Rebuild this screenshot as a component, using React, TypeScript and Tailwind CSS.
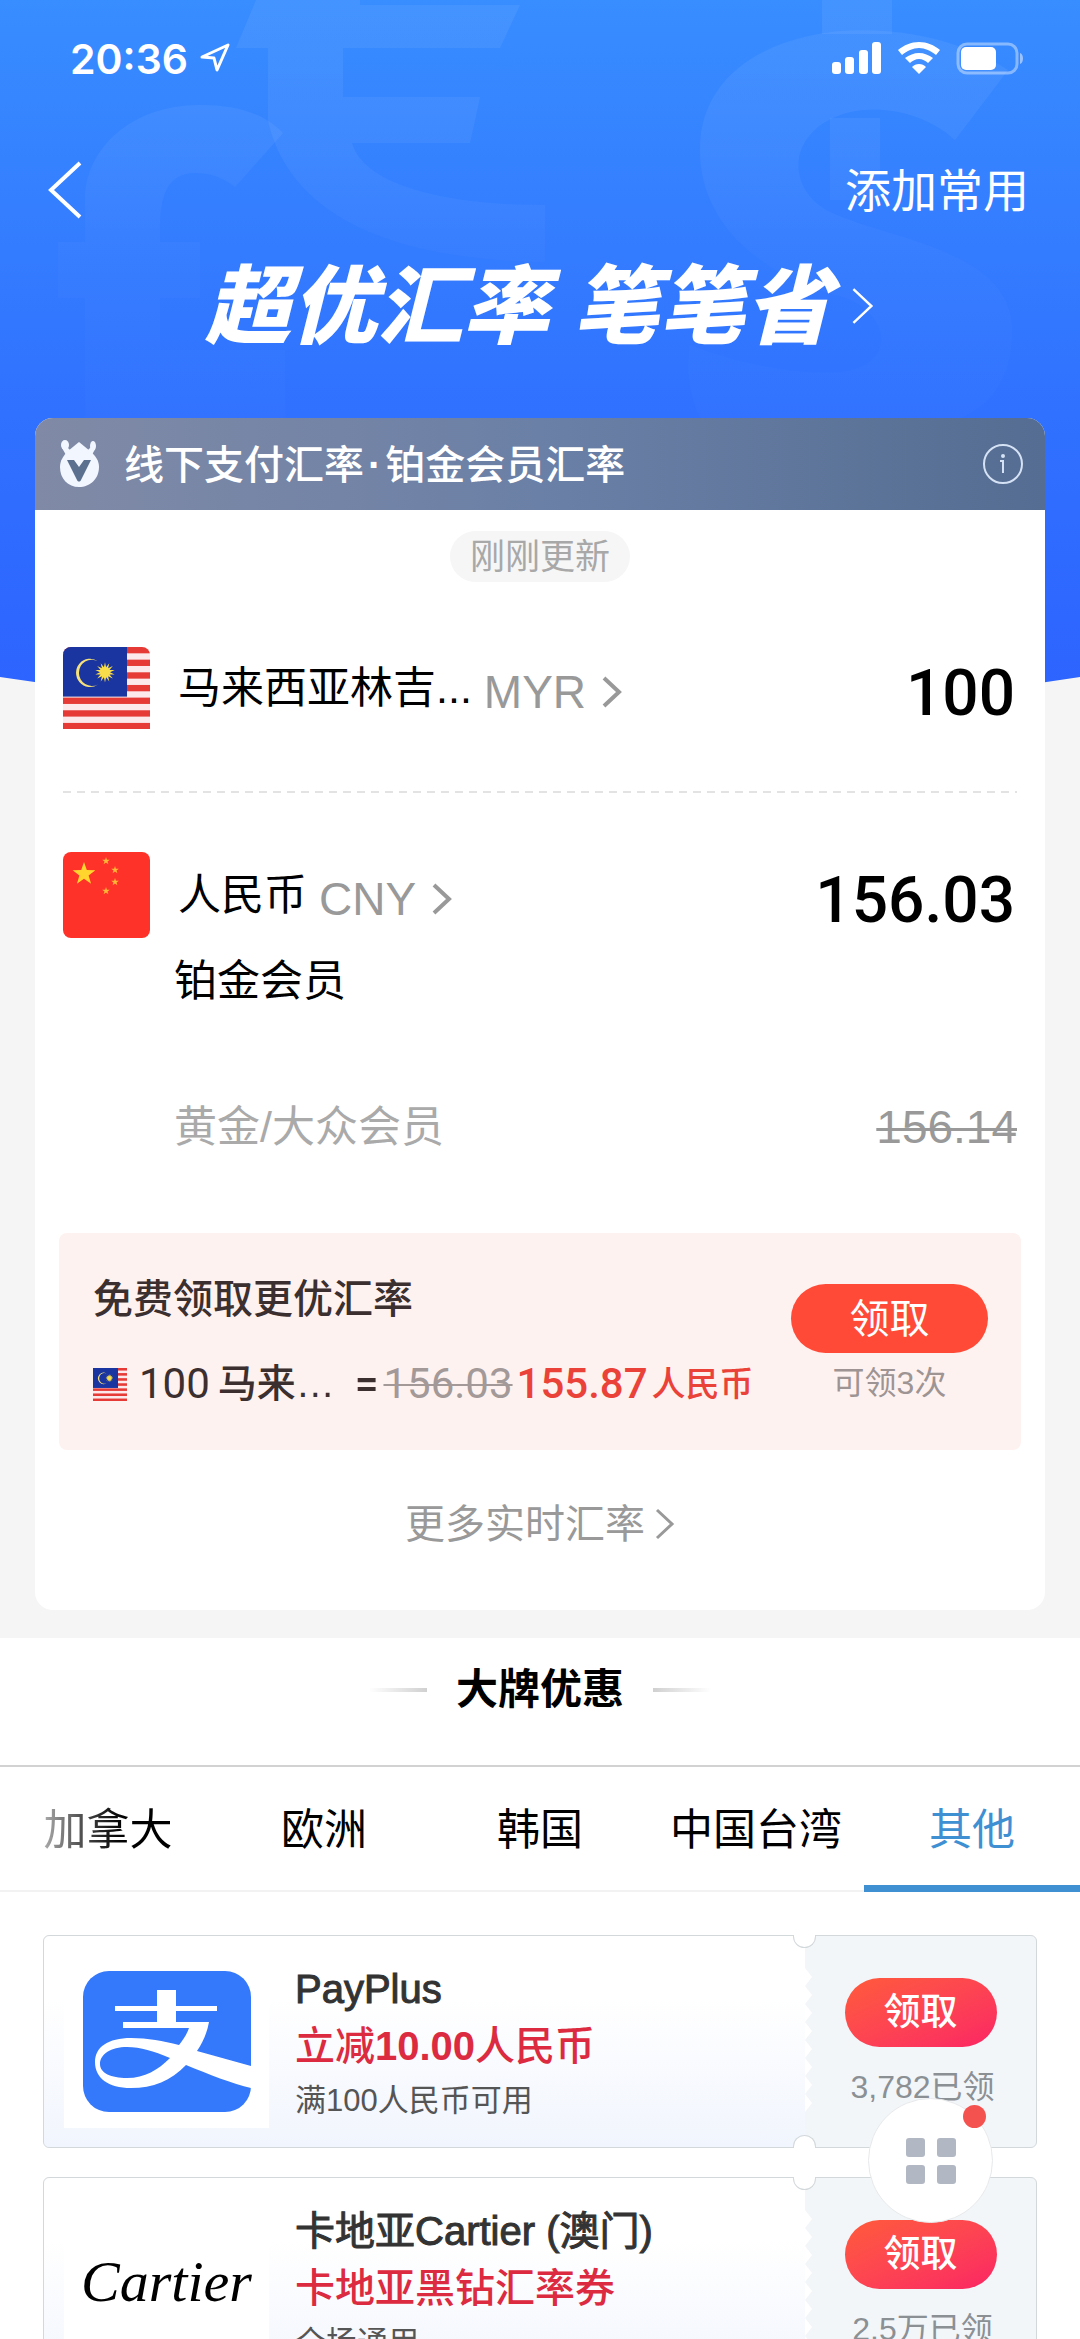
import type { ReactNode } from "react";

const starPoints = (cx: number, cy: number, r: number) =>
  Array.from({ length: 10 }, (_, i) => {
    const a = (Math.PI / 5) * i - Math.PI / 2;
    const d = i % 2 ? r * 0.4 : r;
    return `${(cx + d * Math.cos(a)).toFixed(1)},${(cy + d * Math.sin(a)).toFixed(1)}`;
  }).join(" ");

const sunPoints = (cx: number, cy: number, r: number) =>
  Array.from({ length: 28 }, (_, i) => {
    const a = (Math.PI / 14) * i - Math.PI / 2;
    const d = i % 2 ? r * 0.5 : r;
    return `${(cx + d * Math.cos(a)).toFixed(1)},${(cy + d * Math.sin(a)).toFixed(1)}`;
  }).join(" ");

function HeaderBackdrop() {
  return (
    <svg
      className="absolute inset-x-0 top-0 h-[720px] w-full"
      viewBox="0 0 1080 720"
      preserveAspectRatio="none"
      aria-hidden="true"
    >
      <defs>
        <linearGradient id="sky" x1="0" y1="0" x2="0" y2="1">
          <stop offset="0" stopColor="#388dff" />
          <stop offset="0.3" stopColor="#347eff" />
          <stop offset="0.58" stopColor="#3071ff" />
          <stop offset="1" stopColor="#2d62ff" />
        </linearGradient>
        <linearGradient id="fade" gradientUnits="userSpaceOnUse" x1="0" y1="0" x2="0" y2="420">
          <stop offset="0" stopColor="#fff" stopOpacity="0.06" />
          <stop offset="0.35" stopColor="#fff" stopOpacity="0.05" />
          <stop offset="0.6" stopColor="#fff" stopOpacity="0.02" />
          <stop offset="1" stopColor="#fff" stopOpacity="0.01" />
        </linearGradient>
      </defs>
      <path d="M0 0H1080V677Q540 760 0 677Z" fill="url(#sky)" />
      <path
        d="M85 420V298H58V242H85V200C85 150 130 105 200 105C240 105 265 115 283 133L235 187C222 177 210 173 195 173C165 173 160 200 160 230V242H200V298H160V350H285V420Z"
        fill="url(#fade)"
      />
      <path
        d="M256 0H360V5H520L500 48H343V97H480L470 143H352C362 180 430 205 545 205V262C400 260 290 220 268 120V48H236Z"
        fill="url(#fade)"
      />
      <path d="M822 0H892V34H822ZM830 118H880V200H830Z" fill="url(#fade)" />
      <path
        d="M1008 70L955 140C925 112 880 105 850 112C785 128 785 190 830 212C890 240 1012 250 1012 330C1012 380 990 405 960 418H700C690 395 686 375 690 345C740 365 800 375 840 372C900 366 890 310 840 296C770 278 700 230 700 150C700 20 900 0 1008 70Z"
        fill="url(#fade)"
      />
    </svg>
  );
}

function LocationArrow() {
  return (
    <svg width="30" height="30" viewBox="0 0 30 30" fill="none" stroke="#fff" strokeWidth="3" strokeLinejoin="round" aria-hidden="true">
      <path d="M2 14L28 2L17 27L14 15Z" />
    </svg>
  );
}

function StatusIcons() {
  return (
    <div className="flex items-center gap-4" aria-hidden="true">
      <svg width="50" height="32" viewBox="0 0 50 32" fill="#fff">
        <rect x="0" y="20" width="9" height="12" rx="3" />
        <rect x="13" y="15" width="9" height="17" rx="3" />
        <rect x="27" y="8" width="9" height="24" rx="3" />
        <rect x="40" y="0" width="9" height="32" rx="3" />
      </svg>
      <svg width="42" height="32" viewBox="0 0 42 32" fill="#fff">
        <path d="M21 0C13 0 6 3 0 8L4 13C9 9 15 6 21 6C27 6 33 9 38 13L42 8C36 3 29 0 21 0Z" />
        <path d="M21 11C16 11 11 13 7 16L12 21C14 19 18 17 21 17C24 17 28 19 30 21L35 16C31 13 26 11 21 11Z" />
        <path d="M21 22C18 22 16 23 14 25L21 32L28 25C26 23 24 22 21 22Z" />
      </svg>
      <svg width="69" height="33" viewBox="0 0 69 33">
        <rect x="2" y="2" width="59" height="29" rx="9" fill="none" stroke="#fff" strokeOpacity="0.4" strokeWidth="3" />
        <rect x="5" y="5" width="35" height="23" rx="5" fill="#fff" />
        <path d="M64 11C68 12 68 21 64 22Z" fill="#fff" fillOpacity="0.5" />
      </svg>
    </div>
  );
}

function Chevron({ className, width = 3 }: { className: string; width?: number }) {
  return (
    <svg className={className} viewBox="0 0 20 32" fill="none" stroke="currentColor" strokeWidth={width} aria-hidden="true">
      <path d="M2 2L17 16L2 30" />
    </svg>
  );
}

function MemberBadge() {
  return (
    <svg width="40" height="50" viewBox="0 0 40 50" className="shrink-0" aria-hidden="true">
      <g fill="#f2f6ff">
        <ellipse cx="6" cy="6" rx="4" ry="5" />
        <ellipse cx="34" cy="7" rx="3" ry="5" />
        <path d="M3 9L7 16L12 12L8 8ZM36 10L33 16L28 12L32 8Z" />
        <path d="M20 3L31 12C37 17 40 22 40 28C40 40 31 48 20 48C9 48 1 40 1 28C1 22 4 17 9 12Z" />
      </g>
      <path d="M8 21H15L20 28L25 21H32L22 41C21 43 19 43 18 41Z" fill="#5b6f8f" />
    </svg>
  );
}

function InfoIcon() {
  return (
    <svg width="42" height="42" viewBox="0 0 42 42" fill="none" stroke="#d5e2f5" strokeWidth="2" aria-hidden="true">
      <circle cx="21" cy="21" r="19" />
      <path d="M18 18H21V30" />
      <circle cx="21" cy="13" r="1" />
    </svg>
  );
}

function MalaysiaFlag({ className }: { className: string }) {
  return (
    <svg className={className} viewBox="0 0 87 81" preserveAspectRatio="none" role="img" aria-label="MYR">
      <rect width="87" height="81" fill="#fbe9ec" />
      {[0, 2, 4, 6, 8, 10, 12].map((i) => (
        <rect key={i} y={i * 6.25} width="87" height="6.25" fill="#e53a35" />
      ))}
      <rect width="64" height="49" fill="#1a34a0" />
      <path d="M35 14A14 14 0 1 0 35 37A13 13 0 1 1 35 14Z" fill="#f5e07a" />
      <polygon points={sunPoints(42, 25, 10)} fill="#f8de4a" />
    </svg>
  );
}

function ChinaFlag({ className }: { className: string }) {
  return (
    <svg className={className} viewBox="0 0 87 86" role="img" aria-label="CNY">
      <rect width="87" height="86" fill="#ff3229" />
      <polygon points={starPoints(21, 22, 12)} fill="#ffd52e" />
      <g fill="#ffb836">
        <polygon points={starPoints(43, 9, 4)} />
        <polygon points={starPoints(52, 18, 4)} />
        <polygon points={starPoints(52, 30, 4)} />
        <polygon points={starPoints(43, 39, 4)} />
      </g>
    </svg>
  );
}

function AlipayLogo() {
  return (
    <svg width="168" height="141" viewBox="0 0 168 141" role="img" aria-label="PayPlus">
      <rect width="168" height="141" rx="26" fill="#3478fb" />
      <path
        fill="#fff"
        fillRule="evenodd"
        d="M106 57H40V51H74V40H32V35H74V19H93V35H134V40H93V51H126C124 62 120 71 114 80L168 95V117C150 113 125 103 103 94C88 110 70 117 48 117C25 117 12 107 12 91C12 76 25 67 48 67C65 67 80 70 96 74C100 69 104 63 106 57ZM87 87C70 80 58 76 44 76C28 76 17 83 17 93C17 102 28 107 44 107C62 107 75 99 87 87Z"
      />
    </svg>
  );
}

function CurrencyRow({ flag, name, code, amount }: { flag: ReactNode; name: string; code: string; amount: string }) {
  return (
    <div className="flex h-[100px] items-center pr-[30px] pl-7">
      {flag}
      <button className="ml-[28px] flex items-center">
        <span className="text-[43px] leading-[48px] text-black">{name}</span>
        <span className="ml-3 pt-2 text-[46px] leading-[48px] text-[#999]">{code}</span>
        <Chevron className="mt-2 ml-4 h-8 w-5 text-[#999]" width={4} />
      </button>
      <span className="ml-auto pt-3 font-['Roboto',sans-serif] text-[64px] leading-[70px] font-medium text-black">{amount}</span>
    </div>
  );
}

function Coupon({
  logo,
  title,
  offer,
  note,
  count,
}: {
  logo: ReactNode;
  title: string;
  offer: ReactNode;
  note: string;
  count: string;
}) {
  return (
    <li className="relative flex h-[213px] rounded-[6px] border border-[#d3d8db] bg-[#f3f6f9]">
      <div className="flex grow items-center rounded-l-[6px] bg-gradient-to-b from-white from-30% to-[#f1f5fd] pl-5">
        <div className="flex h-[172px] w-[205px] items-center justify-center bg-white">{logo}</div>
        <div className="ml-[26px] pt-1">
          <h3 className="text-[40px] leading-[52px] font-normal whitespace-nowrap text-[#333] [-webkit-text-stroke:1px_#333]">{title}</h3>
          <p className="mt-1 text-[40px] leading-[54px] font-medium whitespace-nowrap text-[#dc2b40]">{offer}</p>
          <p className="mt-1 text-[31px] leading-[48px] whitespace-nowrap text-[#555]">{note}</p>
        </div>
      </div>
      <div className="relative flex w-[231px] shrink-0 flex-col items-center pt-[42px]">
        <svg className="absolute top-8 left-0 h-[144px] w-[10px]" viewBox="0 0 10 144" aria-hidden="true">
          {[0, 1, 2, 3, 4, 5, 6, 7].map((i) => (
            <path key={i} d={`M0 ${i * 18}L7 ${i * 18 + 9}L0 ${i * 18 + 18}Z`} fill="#fff" />
          ))}
        </svg>
        <span className="absolute -top-px -left-3 h-[13px] w-[23px] rounded-b-full border border-t-0 border-[#d3d8db] bg-white" />
        <span className="absolute -bottom-px -left-3 h-[13px] w-[23px] rounded-t-full border border-b-0 border-[#d3d8db] bg-white" />
        <button className="h-[69px] w-[152px] rounded-full bg-gradient-to-br from-[#ff5a3a] to-[#fb2363] text-[37px] font-medium text-white">
          领取
        </button>
        <span className="mt-5 ml-1 text-[32px] leading-[40px] whitespace-nowrap text-[#8b9095]">{count}</span>
      </div>
    </li>
  );
}

const tabs = ["加拿大", "欧洲", "韩国", "中国台湾", "其他"];

export default function App() {
  return (
    <main className="relative h-screen overflow-hidden bg-white font-['Liberation_Sans','Noto_Sans_CJK_SC',sans-serif]">
      <div className="relative bg-[#f5f5f5] pb-7">
        <HeaderBackdrop />
        <header className="relative text-white">
          <div className="flex h-[116px] items-center justify-between pr-[55px] pl-[70px]">
            <div className="flex items-center gap-3">
              <span className="pt-[2px] font-['Inter',sans-serif] text-[41px] leading-[48px] font-semibold">20:36</span>
              <LocationArrow />
            </div>
            <StatusIcons />
          </div>
          <nav className="flex h-[148px] items-center justify-between pr-[51px] pl-[47px]">
            <button aria-label="返回">
              <svg width="36" height="58" viewBox="0 0 36 58" fill="none" stroke="#fff" strokeWidth="4" aria-hidden="true">
                <path d="M33 2L4 29L33 56" />
              </svg>
            </button>
            <button className="pt-[2px] text-[46px] leading-[56px]">添加常用</button>
          </nav>
          <h1 className="mb-[70px] flex h-[84px] justify-center">
            <a href="#rates" className="flex items-center gap-5">
              <span className="pt-[2px] text-[86px] leading-[84px] font-black whitespace-nowrap italic">超优汇率 笔笔省</span>
              <Chevron className="h-10 w-6" width={2} />
            </a>
          </h1>
        </header>

        <section id="rates" className="relative mx-[35px] overflow-hidden rounded-[18px] bg-white pb-[62px]">
          <div className="flex h-[92px] items-center bg-gradient-to-r from-[#808aa6] via-[#6b80a6] to-[#556d92] pr-[21px] pl-6">
            <MemberBadge />
            <h2 className="ml-[25px] pt-[2px] text-[40px] leading-[48px] font-medium whitespace-nowrap text-white">
              线下支付汇率<span className="px-1 font-bold">·</span>铂金会员汇率
            </h2>
            <button aria-label="说明" className="ml-auto">
              <InfoIcon />
            </button>
          </div>

          <div className="mt-[21px] flex justify-center">
            <span className="flex h-[51px] items-center rounded-full bg-[#f6f6f6] px-5 pt-[2px] text-[35px] text-[#a8a8a8]">刚刚更新</span>
          </div>

          <div className="mt-14">
            <CurrencyRow
              flag={<MalaysiaFlag className="h-[82px] w-[87px] rounded-t-[8px]" />}
              name="马来西亚林吉..."
              code="MYR"
              amount="100"
            />
          </div>
          <div className="mx-7 mt-[53px] h-[2px] bg-[repeating-linear-gradient(90deg,#e3e3e3_0_8px,transparent_8px_14px)]" />
          <div className="mt-[52px]">
            <CurrencyRow flag={<ChinaFlag className="h-[86px] w-[87px] rounded-[8px]" />} name="人民币" code="CNY" amount="156.03" />
          </div>
          <p className="mt-3 pl-[139px] text-[43px] leading-[48px] text-black">铂金会员</p>
          <div className="mt-[98px] flex items-center justify-between pr-7 pl-[139px] leading-[48px]">
            <span className="text-[43px] text-[#aaa]">黄金/大众会员</span>
            <s className="text-[46px] text-[#999] decoration-3">156.14</s>
          </div>

          <div className="mx-6 mt-[82px] flex h-[217px] justify-between rounded-[8px] bg-[#fef2f0] pr-[33px] pl-[34px]">
            <div className="pt-[42px]">
              <h3 className="text-[40px] leading-[48px] font-medium text-[#3b2f2f]">免费领取更优汇率</h3>
              <p className="mt-9 flex items-center leading-[50px] font-medium whitespace-nowrap text-[#3b2f2f]">
                <MalaysiaFlag className="h-[33px] w-[34px]" />
                <span className="ml-3 font-['Roboto',sans-serif] text-[42px] font-normal">100</span>
                <span className="ml-2 text-[39px]">马来…</span>
                <span className="ml-5 font-['Roboto',sans-serif] text-[42px]">=</span>
                <s className="ml-[5px] font-['Roboto',sans-serif] text-[42px] font-normal text-[#a39998] decoration-2">156.03</s>
                <span className="ml-1 font-['Roboto',sans-serif] text-[42px] text-[#ea4239]">155.87</span>
                <span className="ml-1 text-[34px] text-[#ea4239]">人民币</span>
              </p>
            </div>
            <div className="flex flex-col items-center pt-[51px]">
              <button className="h-[69px] w-[197px] rounded-full bg-[#ff4a38] text-[40px] text-white">领取</button>
              <span className="mt-[10px] text-[32px] leading-[40px] text-[#9d9493]">可领3次</span>
            </div>
          </div>

          <div className="mt-[50px] flex justify-center">
            <a href="#more" className="flex items-center text-[40px] leading-[48px] text-[#999]">
              更多实时汇率
              <Chevron className="ml-[10px] h-8 w-5" width={3} />
            </a>
          </div>
        </section>
      </div>

      <section>
        <div className="border-b-2 border-[#d2d2d2] pb-[23px]">
          <div className="flex h-[104px] items-center justify-center gap-[29px]">
            <span className="h-1 w-[58px] bg-gradient-to-r from-white to-[#d0d0d0]" />
            <h2 className="text-[42px] leading-[48px] font-bold text-black">大牌优惠</h2>
            <span className="h-1 w-[58px] bg-gradient-to-l from-white to-[#d0d0d0]" />
          </div>
        </div>
        <div role="tablist" className="grid h-[125px] grid-cols-5">
          {tabs.map((tab, i) => (
            <button
              key={tab}
              role="tab"
              aria-selected={i === 4}
              className={
                i === 4
                  ? "border-b-[7px] border-[#3f8fd3] pt-[9px] text-[43px] text-[#3f8fd3]"
                  : "border-b-2 border-[#f2f2f2] pt-1 text-[43px] text-black"
              }
            >
              {i === 0 ? (
                <span className="bg-gradient-to-r from-[#aaa] to-black to-70% bg-clip-text text-transparent">{tab}</span>
              ) : (
                tab
              )}
            </button>
          ))}
        </div>
        <ul className="mx-[43px] mt-[43px] flex flex-col gap-[29px]">
          <Coupon
            logo={<AlipayLogo />}
            title="PayPlus"
            offer={
              <>
                立减<span className="font-bold">10.00</span>人民币
              </>
            }
            note="满100人民币可用"
            count="3,782已领"
          />
          <Coupon
            logo={<span className="pb-1 font-['Liberation_Serif',serif] text-[58px] text-black italic">Cartier</span>}
            title="卡地亚Cartier (澳门)"
            offer="卡地亚黑钻汇率券"
            note="全场通用"
            count="2.5万已领"
          />
        </ul>
      </section>

      <button
        aria-label="更多服务"
        className="fixed right-[87px] bottom-[116px] flex size-[125px] items-center justify-center rounded-full border border-[#e6e8ea] bg-white"
      >
        <span className="grid grid-cols-2 gap-x-3 gap-y-2">
          <span className="size-[19px] rounded-[3px] bg-[#b2b8c3]" />
          <span className="size-[19px] rounded-[3px] bg-[#b2b8c3]" />
          <span className="size-[19px] rounded-[3px] bg-[#b2b8c3]" />
          <span className="size-[19px] rounded-[3px] bg-[#b2b8c3]" />
        </span>
        <span className="absolute top-[6px] right-[6px] size-[23px] rounded-full bg-[#f4524f]" />
      </button>
    </main>
  );
}
